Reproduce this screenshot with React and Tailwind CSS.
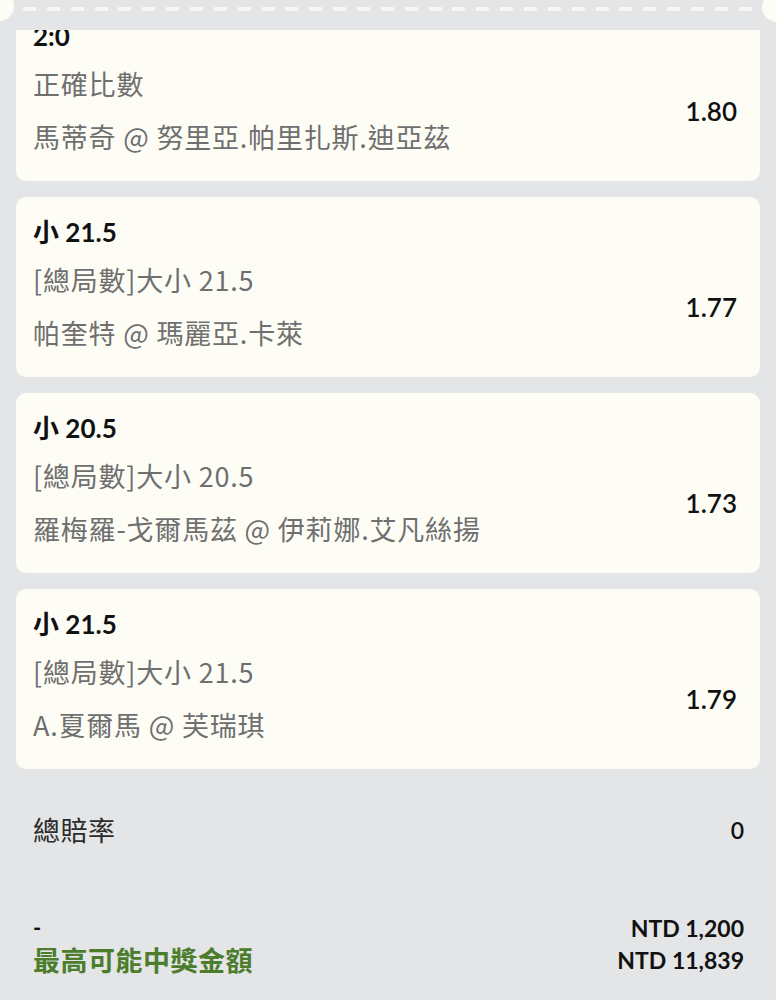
import React from 'react';

const bets = [
  { pick: '2:0', market: '正確比數', match: '馬蒂奇 @ 努里亞.帕里扎斯.迪亞茲', odds: '1.80' },
  { pick: '小 21.5', market: '[總局數]大小 21.5', match: '帕奎特 @ 瑪麗亞.卡萊', odds: '1.77' },
  { pick: '小 20.5', market: '[總局數]大小 20.5', match: '羅梅羅-戈爾馬茲 @ 伊莉娜.艾凡絲揚', odds: '1.73' },
  { pick: '小 21.5', market: '[總局數]大小 21.5', match: 'A.夏爾馬 @ 芙瑞琪', odds: '1.79' },
];

const latin = "font-['Lato','Noto_Sans_CJK_TC',sans-serif]";
const cjk = "font-['Noto_Sans_CJK_TC','Noto_Sans',sans-serif]";

const BetCard = ({ bet }) => (
  <div className="h-[180px] mx-[16px] rounded-[10px] bg-[#fdfdf6] flex items-center justify-between pl-[17px] pr-[23px]">
    <div className="self-start pt-[20px]">
      <div className={`${latin} text-[26px] font-bold leading-[30px] text-[#111]`}>{bet.pick}</div>
      <div className={`${cjk} mt-[6px] text-[27px] leading-[53px] tracking-[0.8px] text-[#6f6f6f]`}>{bet.market}</div>
      <div className={`${cjk} text-[27px] leading-[53px] tracking-[0.8px] text-[#6f6f6f]`}>{bet.match}</div>
    </div>
    <div className={`${latin} mt-[40px] text-[26px] font-semibold leading-[30px] text-[#111]`}>{bet.odds}</div>
  </div>
);

const TicketEdge = () => (
  <div className="relative z-10 h-[30px] bg-[#e4e5e7]">
    <div className="absolute -left-[16px] -top-[9px] w-[30px] h-[30px] rounded-full bg-[#fdfdf6]" />
    <div className="absolute -right-[16px] -top-[8px] w-[30px] h-[30px] rounded-full bg-[#fdfdf6]" />
    <div className="flex justify-between pl-[23px] pr-[24px] pt-[7px]">
      {Array.from({ length: 31 }).map((_, i) => (
        <span key={i} className="block w-[13px] h-[4px] rounded-[1px] bg-[#f7f7f7]" />
      ))}
    </div>
  </div>
);

export default function App() {
  return (
    <div className="w-[776px] h-[1000px] overflow-hidden bg-[#e4e5e7]">
      <TicketEdge />
      <div className="-mt-[29px] flex flex-col gap-4">
        {bets.map((bet, i) => (
          <BetCard key={i} bet={bet} />
        ))}
      </div>
      <div className="pl-[33px] pr-[32px] mt-[43px] flex justify-between items-center">
        <div className={`${cjk} text-[27px] leading-[36px] tracking-[0.5px] text-[#2b2b2b]`}>總賠率</div>
        <div className={`${latin} text-[23px] font-semibold leading-[36px] text-[#111]`}>0</div>
      </div>
      <div className="pl-[33px] pr-[32px] mt-[64px] flex justify-between">
        <div>
          <div className={`${latin} text-[22px] font-bold leading-[32px] text-[#111]`}>-</div>
          <div className={`${cjk} text-[27px] font-bold leading-[32px] tracking-[0.5px] text-[#4b7d2d]`}>最高可能中獎金額</div>
        </div>
        <div className="text-right">
          <div className={`${latin} text-[23px] font-bold leading-[32px] text-[#111]`}>NTD 1,200</div>
          <div className={`${latin} text-[23px] font-bold leading-[32px] text-[#111]`}>NTD 11,839</div>
        </div>
      </div>
    </div>
  );
}
